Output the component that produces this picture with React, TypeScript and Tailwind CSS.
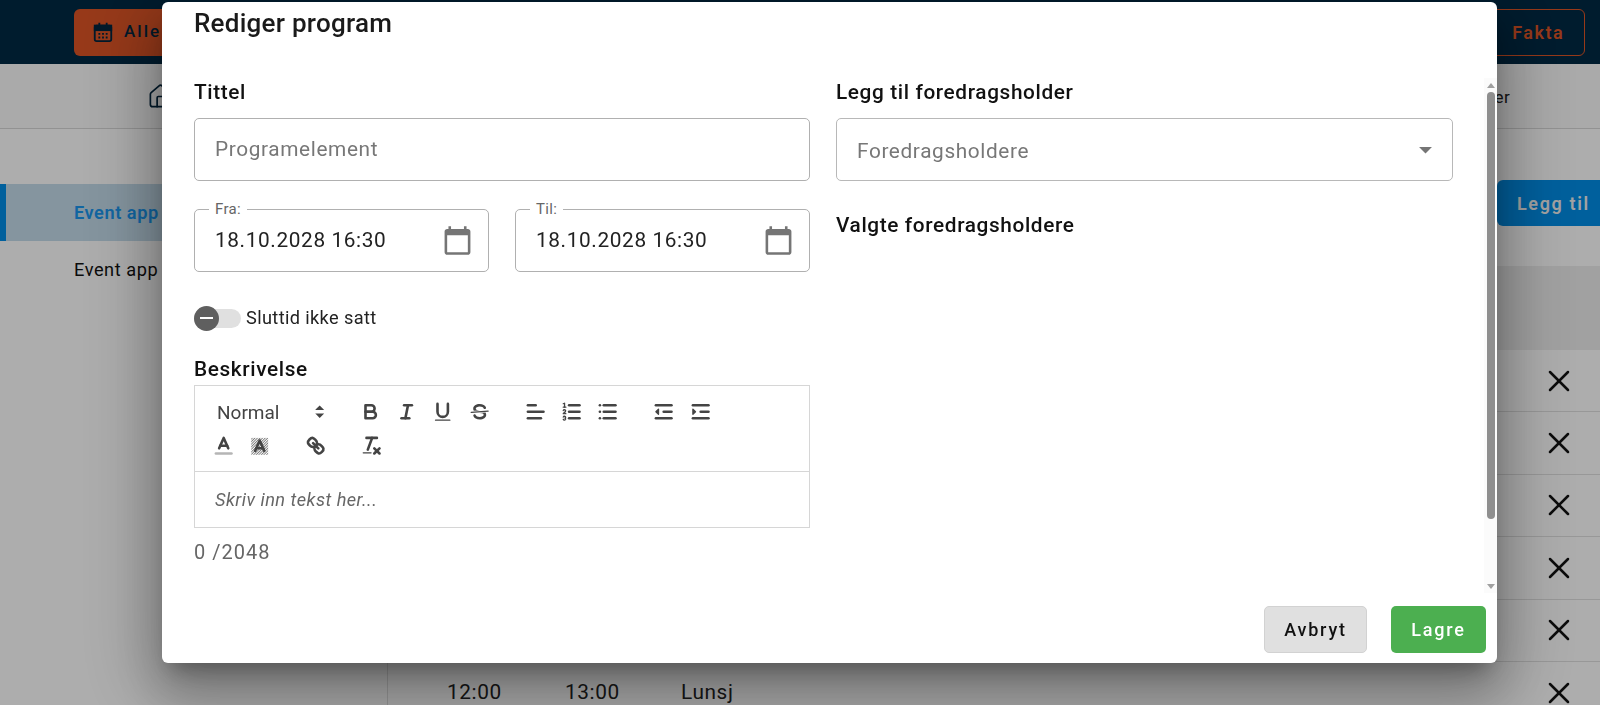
import { Home, X } from 'lucide-react';

// Quill toolbar icons, drawn on its 18x18 grid
const stroke = { fill: 'none', stroke: '#444', strokeWidth: 2, strokeLinecap: 'round', strokeLinejoin: 'round' } as const;
const thin = { ...stroke, strokeWidth: 1 };

const toolbarRow1 = [
  [
    <g key="b" {...stroke}>
      <path d="M5,4H9.5A2.5,2.5,0,0,1,12,6.5v0A2.5,2.5,0,0,1,9.5,9H5A0,0,0,0,1,5,9V4A0,0,0,0,1,5,4Z" />
      <path d="M5,9h5.5A2.5,2.5,0,0,1,13,11.5v0A2.5,2.5,0,0,1,10.5,14H5a0,0,0,0,1,0,0V9A0,0,0,0,1,5,9Z" />
    </g>,
    <g key="i" {...stroke}>
      <line x1="7" x2="13" y1="4" y2="4" />
      <line x1="5" x2="11" y1="14" y2="14" />
      <line x1="8" x2="10" y1="14" y2="4" />
    </g>,
    <g key="u">
      <path {...stroke} d="M5,3V9a4.012,4.012,0,0,0,4,4H9a4.012,4.012,0,0,0,4-4V3" />
      <rect fill="#444" height="1" rx="0.5" ry="0.5" width="12" x="3" y="15" />
    </g>,
    <g key="s">
      <line {...thin} x1="15.5" x2="2.5" y1="8.5" y2="9.5" />
      <path fill="#444" d="M9.007,8C6.542,7.791,6,7.519,6,6.5,6,5.792,7.283,5,9,5c1.571,0,2.765.679,2.969,1.309a1,1,0,0,0,1.9-.617C13.356,4.106,11.354,3,9,3,6.2,3,4,4.538,4,6.5a3.2,3.2,0,0,0,.5,1.843Z" />
      <path fill="#444" d="M8.984,10C11.457,10.208,12,10.479,12,11.5c0,.708-1.283,1.5-3,1.5-1.571,0-2.765-.679-2.969-1.309a1,1,0,1,0-1.9.617C4.644,13.894,6.646,15,9,15c2.8,0,5-1.538,5-3.5a3.2,3.2,0,0,0-.5-1.843Z" />
    </g>,
  ],
  [
    <g key="al" {...stroke}>
      <line x1="3" x2="15" y1="9" y2="9" />
      <line x1="3" x2="13" y1="14" y2="14" />
      <line x1="3" x2="9" y1="4" y2="4" />
    </g>,
    <g key="ol">
      <g {...stroke}>
        <line x1="7" x2="15" y1="4" y2="4" />
        <line x1="7" x2="15" y1="9" y2="9" />
        <line x1="7" x2="15" y1="14" y2="14" />
      </g>
      <line {...thin} x1="2.5" x2="4.5" y1="5.5" y2="5.5" />
      <path fill="#444" d="M3.5,6A0.5,0.5,0,0,1,3,5.5V3.085l-0.276.138A0.5,0.5,0,0,1,2.053,3c-0.124-.247-0.023-0.324.224-0.447l1-.5A0.5,0.5,0,0,1,4,2.5v3A0.5,0.5,0,0,1,3.5,6Z" />
      <path {...thin} d="M4.5,10.5h-2c0-.234,1.85-1.076,1.85-2.234A0.959,0.959,0,0,0,2.5,8.156" />
      <path {...thin} d="M2.5,14.846a0.959,0.959,0,0,0,1.85-.109A0.7,0.7,0,0,0,3.75,14a0.688,0.688,0,0,0,.6-0.736,0.959,0.959,0,0,0-1.85-.109" />
    </g>,
    <g key="ul" {...stroke}>
      <line x1="6" x2="15" y1="4" y2="4" />
      <line x1="6" x2="15" y1="9" y2="9" />
      <line x1="6" x2="15" y1="14" y2="14" />
      <line x1="3" x2="3" y1="4" y2="4" />
      <line x1="3" x2="3" y1="9" y2="9" />
      <line x1="3" x2="3" y1="14" y2="14" />
    </g>,
  ],
  [
    <g key="out" {...stroke}>
      <line x1="3" x2="15" y1="14" y2="14" />
      <line x1="3" x2="15" y1="4" y2="4" />
      <line x1="9" x2="15" y1="9" y2="9" />
      <polygon fill="#444" strokeWidth="1" points="5 7 5 11 3 9 5 7" />
    </g>,
    <g key="in" {...stroke}>
      <line x1="3" x2="15" y1="14" y2="14" />
      <line x1="3" x2="15" y1="4" y2="4" />
      <line x1="9" x2="15" y1="9" y2="9" />
      <polygon fill="#444" strokeWidth="1" points="3 7 3 11 5 9 3 7" />
    </g>,
  ],
];

const toolbarRow2 = [
  [
    <g key="color">
      <line {...stroke} stroke="#b5b5b5" x1="3" x2="15" y1="15" y2="15" />
      <polyline {...stroke} points="5.5 11 9 3 12.5 11" />
      <line {...stroke} x1="11.63" x2="6.38" y1="9" y2="9" />
    </g>,
    <g key="bg">
      <defs>
        <pattern id="hatch" width="1.4" height="1.4" patternUnits="userSpaceOnUse" patternTransform="rotate(45)">
          <rect width="0.6" height="1.4" fill="#666" />
        </pattern>
      </defs>
      <rect x="2.5" y="3" width="13" height="13" fill="url(#hatch)" />
      <polyline {...stroke} points="5.5 13 9 5 12.5 13" />
      <line {...stroke} x1="11.63" x2="6.38" y1="11" y2="11" />
    </g>,
  ],
  [
    <g key="link" {...stroke}>
      <line x1="7" x2="11" y1="7" y2="11" />
      <path d="M8.9,4.577a3.476,3.476,0,0,1,.36,4.679A3.476,3.476,0,0,1,4.577,8.9C3.185,7.5,2.035,6.4,4.217,4.217S7.5,3.185,8.9,4.577Z" />
      <path d="M13.423,9.1a3.476,3.476,0,0,0-4.679-.36,3.476,3.476,0,0,0,.36,4.679c1.392,1.392,2.5,2.542,4.679.36S14.815,10.5,13.423,9.1Z" />
    </g>,
  ],
  [
    <g key="clean">
      <g {...stroke}>
        <line x1="5" x2="13" y1="3" y2="3" />
        <line x1="6" x2="9.35" y1="12" y2="3" />
        <line x1="11" x2="15" y1="11" y2="15" />
        <line x1="15" x2="11" y1="11" y2="15" />
      </g>
      <rect fill="#444" height="1" rx="0.5" ry="0.5" width="7" x="2" y="14" />
    </g>,
  ],
];

function ToolGroup({ icons }: { icons: React.ReactNode[] }) {
  return (
    <div className="flex mr-[19.5px]">
      {icons.map((icon, i) => (
        <button key={i} className="w-[36.4px] h-[31.2px] flex items-center justify-center">
          <svg viewBox="0 0 18 18" className="w-[23.4px] h-[23.4px]">
            {icon}
          </svg>
        </button>
      ))}
    </div>
  );
}

function CalendarIcon() {
  return (
    <svg viewBox="0 0 24 24" className="w-[31px] h-[31px] shrink-0" fill="#757575">
      <path d="M20 3h-1V1h-2v2H7V1H5v2H4c-1.1 0-2 .9-2 2v16c0 1.1.9 2 2 2h16c1.1 0 2-.9 2-2V5c0-1.1-.9-2-2-2zm0 18H4V8h16v13z" />
    </svg>
  );
}

function DateField({ label }: { label: string }) {
  return (
    <div className="relative flex-1 h-[63px] border border-[#b0b0b0] rounded-[5px] flex items-center justify-between pl-[20px] pr-[15px]">
      <span className="absolute -top-[10px] left-[14px] px-[6px] bg-white text-[15px] leading-[18px] text-[#666] tracking-[0.02em]">
        {label}
      </span>
      <span className="text-[20.8px] text-[#222] tracking-[0.03em]">18.10.2028 16:30</span>
      <CalendarIcon />
    </div>
  );
}

function Label({ children }: { children: React.ReactNode }) {
  return <div className="text-[20.8px] leading-[24px] font-medium text-[#111] tracking-[0.03em]">{children}</div>;
}

export default function App() {
  const rows = ['', '', '', '', '', ''];

  return (
    <div className="relative h-screen overflow-hidden bg-white font-[Roboto,sans-serif]">
      {/* Page behind the dialog */}
      <header className="h-[64px] bg-[#002a45] flex items-center justify-between pl-[74px] pr-[15px]">
        <button className="w-[200px] h-[47px] rounded-[6px] bg-[#df5526] flex items-center pl-[18px] gap-[10px] text-[#00263f] text-[17px] font-medium tracking-[0.12em]">
          <svg viewBox="0 0 24 24" className="w-[22px] h-[22px]" fill="none" stroke="#00263f" strokeWidth="2">
            <rect x="3" y="5" width="18" height="17" rx="2" />
            <rect x="3" y="5" width="18" height="5" fill="#00263f" />
            <path d="M8 2v4M16 2v4" />
            <path d="M7 14h2M11 14h2M15 14h2M7 18h2M11 18h2M15 18h2" />
          </svg>
          Alle
        </button>
        <button className="w-[160px] h-[47px] rounded-[6px] border border-[#df5526] flex items-center justify-end pr-[20px] text-[#df5526] text-[18px] font-semibold tracking-[0.08em]">
          Fakta
        </button>
      </header>
      <nav className="h-[65px] border-b border-[#d8d8d8] bg-[#fbfbfb] flex items-center justify-between pl-[147px] pr-[90px]">
        <Home size={27} strokeWidth={1.5} className="text-[#00263f]" />
        <span className="pt-[4px] text-[17px] text-[#222] tracking-[0.02em]">Foredragsholder</span>
      </nav>
      <div className="flex">
        <aside className="w-[387px] shrink-0 pt-[55px]">
          <div className="h-[57px] border-l-[6px] border-[#008ee8] bg-[#c4dceb] flex items-center pl-[68px] text-[18.2px] font-semibold text-[#1a96ee] tracking-[0.03em]">
            Event app
          </div>
          <div className="h-[57px] flex items-center pl-[74px] text-[18.2px] text-[#111] tracking-[0.03em]">Event app</div>
        </aside>
        <main className="flex-1 border-l border-[#e0e0e0] pt-[51px]">
          <div className="flex justify-end">
            <button className="w-[103px] h-[46px] rounded-l-[6px] bg-[#008ee8] pl-[20px] text-left text-[18px] font-semibold text-[#f0f0f0] tracking-[0.09em]">
              Legg til
            </button>
          </div>
          <div className="h-[84px] mt-[40px] bg-[#eeeeee]" />
          {rows.map((_, i) => (
            <div key={i} className="h-[62.4px] border-b border-[#e0e0e0] flex items-center pl-[59px] pr-[23px] text-[20.8px] text-[#222] tracking-[0.03em]">
              {i === 5 && (
                <>
                  <span className="w-[118px]">12:00</span>
                  <span className="w-[116px]">13:00</span>
                  <span>Lunsj</span>
                </>
              )}
              <X size={36} strokeWidth={1.7} className="ml-auto text-[#111]" />
            </div>
          ))}
        </main>
      </div>

      {/* Dialog */}
      <div className="fixed inset-0 bg-[rgba(0,0,0,0.32)] pl-[162px] pt-[2px]">
        <div className="w-[1335px] h-[661px] bg-white rounded-[6px] flex flex-col shadow-[0_14px_20px_-9px_rgba(0,0,0,0.3),0_31px_49px_4px_rgba(0,0,0,0.2),0_12px_70px_20px_rgba(0,0,0,0.2)]">
          <h2 className="pl-[32px] pt-[6px] h-[80px] text-[26px] leading-[30px] font-medium text-[#1a1a1a] tracking-[0.01em]">Rediger program</h2>
          <div className="flex flex-1 min-h-0">
            <div className="flex-1 flex gap-[26px] pl-[32px] pr-[31px]">
              <div className="w-[616px]">
                <div className="-mt-[2px]">
                  <Label>Tittel</Label>
                </div>
                <div className="mt-[14px] h-[63px] border border-[#b0b0b0] rounded-[5px] flex items-center pl-[20px] text-[20.8px] text-[#777] tracking-[0.03em]">
                  Programelement
                </div>
                <div className="mt-[28px] flex gap-[26px]">
                  <DateField label="Fra:" />
                  <DateField label="Til:" />
                </div>
                <div className="mt-[33px] flex items-center gap-[5px] h-[26px]">
                  <div className="relative w-[47px] h-[19px] rounded-full bg-[#e0e0e0]">
                    <div className="absolute left-0 -top-[3px] w-[25px] h-[25px] rounded-full bg-[#5f5f5f] flex items-center justify-center">
                      <div className="w-[13px] h-[2px] bg-white" />
                    </div>
                  </div>
                  <span className="text-[18.2px] text-[#222] tracking-[0.02em]">Sluttid ikke satt</span>
                </div>
                <div className="mt-[26px]">
                  <Label>Beskrivelse</Label>
                </div>
                <div className="mt-[4px] border border-[#d6d6d6]">
                  <div className="pt-[10.5px] pb-[10.5px] pl-[10px] flex flex-wrap gap-y-[2px] border-b border-[#d6d6d6]">
                    <div className="w-[127px] mr-[20px] h-[31.2px] flex items-center justify-between pl-[12px] text-[19px] text-[#444]">
                      <span className="pt-[3px]">Normal</span>
                      <svg viewBox="0 0 18 18" className="w-[23.4px] h-[23.4px] -translate-x-[1px]" fill="#444" stroke="#444" strokeWidth="1.2">
                        <polygon points="7 11 9 13 11 11 7 11" />
                        <polygon points="7 7 9 5 11 7 7 7" />
                      </svg>
                    </div>
                    {toolbarRow1.map((icons, i) => (
                      <ToolGroup key={i} icons={icons} />
                    ))}
                    {toolbarRow2.map((icons, i) => (
                      <ToolGroup key={i} icons={icons} />
                    ))}
                  </div>
                  <div className="h-[55px] flex items-center pl-[20px] text-[18.2px] italic text-[#666] tracking-[0.025em]">
                    Skriv inn tekst her...
                  </div>
                </div>
                <div className="mt-[9px] text-[20px] text-[#666] tracking-[0.05em]">0 /2048</div>
              </div>
              <div className="w-[617px]">
                <div className="-mt-[2px]">
                  <Label>Legg til foredragsholder</Label>
                </div>
                <div className="mt-[14px] h-[63px] border border-[#b8b8b8] rounded-[5px] flex items-center justify-between pl-[20px] pr-[11px] text-[20.8px] text-[#777] tracking-[0.03em]">
                  <span className="pt-[4px]">Foredragsholdere</span>
                  <svg viewBox="0 0 24 24" className="w-[31px] h-[31px]" fill="#757575">
                    <path d="M7 10l5 5 5-5z" />
                  </svg>
                </div>
                <div className="mt-[32px]">
                  <Label>Valgte foredragsholdere</Label>
                </div>
              </div>
            </div>
            {/* Scrollbar */}
            <div className="w-[13px] -mt-[4px] bg-[#fbfbfb] flex flex-col items-center h-[515px] shrink-0">
              <div className="h-[14px] flex items-center justify-center">
                <div className="w-0 h-0 border-x-[4px] border-x-transparent border-b-[5px] border-b-[#a0a0a0]" />
              </div>
              <div className="w-[8px] h-[427px] rounded-full bg-[#8f8f8f]" />
              <div className="mt-auto h-[14px] flex items-center justify-center">
                <div className="w-0 h-0 border-x-[4px] border-x-transparent border-t-[5px] border-t-[#a0a0a0]" />
              </div>
            </div>
          </div>
          <div className="flex justify-end gap-[24px] pr-[11px] pb-[10px]">
            <button className="w-[103px] h-[47px] rounded-[5px] bg-[#e0e0e0] border border-[#d2d2d2] text-[18px] font-medium text-[#111] tracking-[0.1em]">
              Avbryt
            </button>
            <button className="w-[95px] h-[47px] rounded-[5px] bg-[#4caf50] text-[18px] font-medium text-white tracking-[0.1em]">
              Lagre
            </button>
          </div>
        </div>
      </div>
    </div>
  );
}
